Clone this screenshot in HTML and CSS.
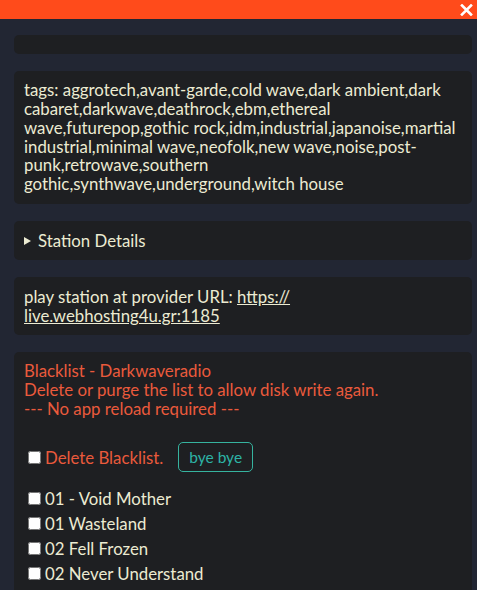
FILE: index.html
```html
<!DOCTYPE html>
<html>
<head>
<meta charset="utf-8">
<link rel="stylesheet" href="styles.css">
</head>
<body>
<header class="topbar">
  <span class="close">
    <svg width="13" height="12" viewBox="0 0 13 12"><path d="M2 1.5 L11 10.5 M11 1.5 L2 10.5" stroke="#fff" stroke-width="2.6" stroke-linecap="square"/></svg>
  </span>
</header>
<main class="content">
  <div class="card empty"></div>
  <div class="card tags">tags: aggrotech,avant-garde,cold wave,dark ambient,dark cabaret,darkwave,deathrock,ebm,ethereal wave,futurepop,gothic rock,idm,industrial,japanoise,martial industrial,minimal wave,neofolk,new wave,noise,post-punk,retrowave,southern gothic,synthwave,underground,witch house</div>
  <details class="card">
    <summary class="summary">Station Details</summary>
  </details>
  <div class="card">play station at provider URL: <a class="link" href="#">https://<wbr>live.webhosting4u.gr:1185</a></div>
  <div class="card blacklist">
    <div class="warn">Blacklist - Darkwaveradio<br>Delete or purge the list to allow disk write again.<br>--- No app reload required ---</div>
    <div class="delete-row">
      <label class="check warn"><input type="checkbox">Delete Blacklist.</label>
      <button class="bye">bye bye</button>
    </div>
    <ul class="list">
      <li><label class="check"><input type="checkbox">01 - Void Mother</label></li>
      <li><label class="check"><input type="checkbox">01 Wasteland</label></li>
      <li><label class="check"><input type="checkbox">02 Fell Frozen</label></li>
      <li><label class="check"><input type="checkbox">02 Never Understand</label></li>
    </ul>
  </div>
</main>
</body>
</html>
```

FILE: styles.css
```css
html, body {
  margin: 0;
  padding: 0;
  background: #222633;
  height: 100%;
  overflow: hidden;
}
body {
  font-family: "Lato", "Open Sans", sans-serif;
  font-size: 16.8px;
  line-height: 19px;
  color: #ecebd2;
}
.topbar {
  height: 19px;
  background: #ff4b1b;
  display: flex;
  justify-content: flex-end;
  align-items: center;
  padding-right: 4px;
}
.close {
  display: flex;
  width: 13px;
  height: 12px;
}
.content {
  padding: 16px 5px 0 14px;
}
.card {
  background: #1e1f22;
  border-radius: 5px;
  padding: 10px;
  margin-bottom: 17px;
}
.card.empty {
  height: 0;
  padding: 9px 10px 10px;
}
.card.tags {
  line-height: 18.85px;
}
.card.blacklist {
  padding-top: 9px;
}
.summary {
  display: flex;
  align-items: center;
  height: 19px;
  list-style: none;
  cursor: pointer;
}
.summary::-webkit-details-marker {
  display: none;
}
.summary::before {
  content: "";
  width: 0;
  height: 0;
  border-left: 7px solid #ecebd2;
  border-top: 4px solid transparent;
  border-bottom: 4px solid transparent;
  margin: 1px 7px 0 0;
}
.link {
  color: #ecebd2;
  text-decoration: underline;
}
.warn {
  color: #ea5a3c;
}
.delete-row {
  display: flex;
  align-items: center;
  margin-top: 24px;
  gap: 15px;
}
.check {
  display: flex;
  align-items: center;
}
.check input {
  width: 13px;
  height: 13px;
  margin: 0 4px 0 4px;
}
.bye {
  background: transparent;
  border: 1px solid #36b39f;
  border-radius: 5px;
  color: #2db3a6;
  font-family: "Lato", "Open Sans", sans-serif;
  font-size: 15.5px;
  width: 75px;
  height: 30px;
  padding: 0;
}
.list {
  list-style: none;
  margin: 14px 0 0;
  padding: 0;
}
.list li {
  height: 25px;
  display: flex;
  align-items: center;
}
```
